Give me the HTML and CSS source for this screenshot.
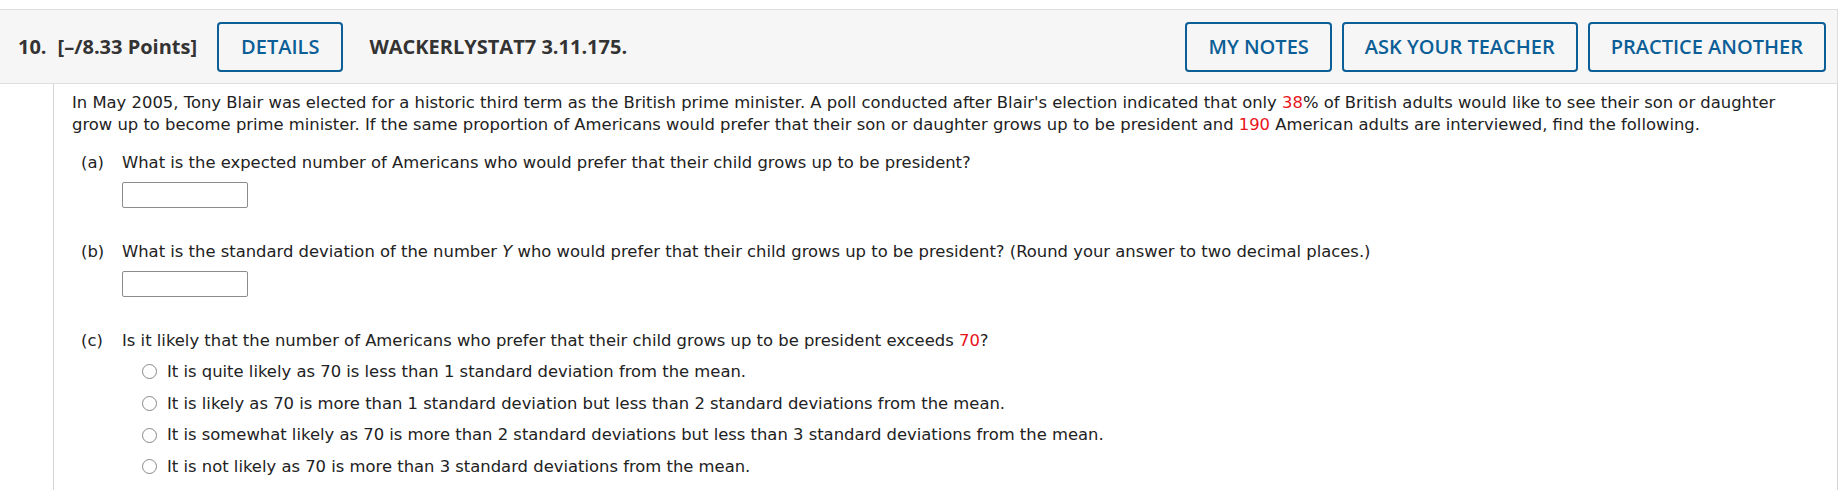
FILE: index.html
```html
<!DOCTYPE html>
<html lang="en">
<head>
<meta charset="utf-8">
<title>Question 10</title>
<link rel="stylesheet" href="styles.css">
</head>
<body>
<div class="page">
  <div class="qhead">
    <div class="qtitle"><span class="qnum">10.</span><span class="pts">[–/8.33 Points]</span></div>
    <button class="btn btn-details">DETAILS</button>
    <span class="qref">WACKERLYSTAT7 3.11.175.</span>
    <div class="actions">
      <button class="btn">MY NOTES</button>
      <button class="btn">ASK YOUR TEACHER</button>
      <button class="btn">PRACTICE ANOTHER</button>
    </div>
  </div>
  <div class="qbody">
    <p class="stem">In May 2005, Tony Blair was elected for a historic third term as the British prime minister. A poll conducted after Blair's election indicated that only <span class="red">38</span>% of British adults would like to see their son or daughter grow up to become prime minister. If the same proportion of Americans would prefer that their son or daughter grows up to be president and <span class="red">190</span> American adults are interviewed, find the following.</p>

    <div class="part">
      <span class="plabel">(a)</span>
      <div class="pcontent">
        <div class="ptext">What is the expected number of Americans who would prefer that their child grows up to be president?</div>
        <input class="ans" type="text">
      </div>
    </div>

    <div class="part">
      <span class="plabel">(b)</span>
      <div class="pcontent">
        <div class="ptext">What is the standard deviation of the number <i>Y</i> who would prefer that their child grows up to be president? (Round your answer to two decimal places.)</div>
        <input class="ans" type="text">
      </div>
    </div>

    <div class="part">
      <span class="plabel">(c)</span>
      <div class="pcontent">
        <div class="ptext">Is it likely that the number of Americans who prefer that their child grows up to be president exceeds <span class="red">70</span>?</div>
        <ul class="choices">
          <li class="choice"><span class="radio"></span>It is quite likely as 70 is less than 1 standard deviation from the mean.</li>
          <li class="choice"><span class="radio"></span>It is likely as 70 is more than 1 standard deviation but less than 2 standard deviations from the mean.</li>
          <li class="choice"><span class="radio"></span>It is somewhat likely as 70 is more than 2 standard deviations but less than 3 standard deviations from the mean.</li>
          <li class="choice"><span class="radio"></span>It is not likely as 70 is more than 3 standard deviations from the mean.</li>
        </ul>
      </div>
    </div>
  </div>
</div>
</body>
</html>
```

FILE: styles.css
```css
* { box-sizing: border-box; }
html, body { margin: 0; padding: 0; background: #fff; }
body { font-family: "DejaVu Sans", Verdana, sans-serif; color: #222; }

.page {
  width: 1838px;
  height: 490px;
  overflow: hidden;
  padding-top: 9px;
  display: flex;
  flex-direction: column;
}

.qhead {
  height: 75px;
  flex: none;
  background: #f6f6f6;
  border-top: 1px solid #dedede;
  border-bottom: 1px solid #dedede;
  border-right: 1px solid #dedede;
  display: flex;
  align-items: center;
  padding: 0 11px 0 18px;
  font-family: "Open Sans", sans-serif;
}

.qtitle {
  font-weight: 700;
  font-size: 20px;
  color: #333;
  display: flex;
  gap: 11px;
}

.btn {
  font-family: "Open Sans", sans-serif;
  font-size: 20px;
  font-weight: 600;
  color: #0b5e96;
  background: transparent;
  border: 2px solid #0b5e96;
  border-radius: 4px;
  height: 50px;
  padding: 0 21px;
  cursor: pointer;
}

.btn-details {
  margin-left: 20px;
  padding: 0 22px;
}

.qref {
  margin-left: 26px;
  font-weight: 700;
  font-size: 20px;
  color: #333;
}

.actions {
  margin-left: auto;
  display: flex;
  gap: 10px;
}

.qbody {
  flex: 1;
  margin-left: 53px;
  border-left: 1px solid #d4d4d4;
  border-right: 1px solid #d4d4d4;
  padding: 8px 40px 0 18px;
  font-size: 16.4px;
  line-height: 22px;
}

.stem { margin: 0 0 16px 0; }

.red { color: #e8141b; }

.part {
  display: flex;
  margin-left: 9px;
  margin-bottom: 33px;
}
.part:last-child { margin-bottom: 0; }

.plabel { width: 41px; flex: none; }

.pcontent { flex: 1; }

.ans {
  display: block;
  margin-top: 8px;
  width: 126px;
  height: 26px;
  border: 1px solid #8c8c8c;
  border-radius: 2px;
  background: #fff;
}

.choices {
  list-style: none;
  margin: 0;
  padding: 0 0 0 20px;
}

.choice {
  display: flex;
  align-items: center;
  height: 31.7px;
}
.choice:first-child { margin-top: 4px; }

.radio {
  width: 15px;
  height: 15px;
  border: 1.5px solid #888;
  border-radius: 50%;
  margin-right: 10px;
  flex: none;
}
```
